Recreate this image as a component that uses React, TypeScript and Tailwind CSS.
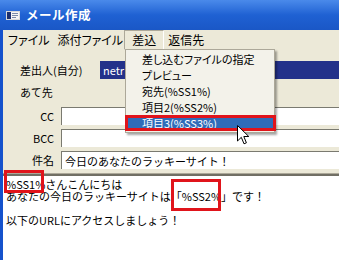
import React from 'react';

const dropItems = ['差し込むファイルの指定', 'プレビュー', '宛先(%SS1%)', '項目2(%SS2%)', '項目3(%SS3%)'];

function TitleIcon() {
  return (
    <svg width="14" height="9" viewBox="0 0 14 9" className="shrink-0">
      <rect x="0.5" y="0.5" width="13" height="8" fill="#f4f4f4" stroke="#d8d8d8" />
      <rect x="1" y="1" width="4" height="7" fill="#1c2f6e" />
      <rect x="6" y="2" width="6" height="1" fill="#7a8aa8" />
      <rect x="6" y="4" width="6" height="1" fill="#7a8aa8" />
      <rect x="6" y="6" width="4" height="1" fill="#7a8aa8" />
    </svg>
  );
}

function Cursor() {
  return (
    <svg width="13" height="21" viewBox="0 0 13 21" className="absolute left-[237px] top-[125px]">
      <path d="M0.5 0.5 L0.5 16 L4.3 12.3 L7 18.8 L9.4 17.8 L6.8 11.5 L11.8 11.5 Z" fill="#ffffff" stroke="#000000" strokeWidth="1" strokeLinejoin="round" />
    </svg>
  );
}

function FieldRow({ label, value }: { label: string; value?: string }) {
  return (
    <div className="flex items-center h-[18px]">
      <div className="w-[52px] text-right pr-[1px]">{label}</div>
      <div className="ml-[6px] flex-1 h-[18px] bg-white border-t border-l border-t-[#7a7a70] border-l-[#7a7a70] flex items-center pl-[3px] whitespace-nowrap">
        {value}
      </div>
    </div>
  );
}

export default function App() {
  return (
    <div
      className="relative w-[339px] h-[260px] overflow-hidden bg-[#ece9d8] text-[11px] leading-[12px] text-black"
      style={{ fontFamily: '"Noto Sans CJK JP", "Noto Sans", sans-serif' }}
    >
      {/* Title bar */}
      <div className="h-[30px] flex items-center gap-[6px] pl-[6px] bg-gradient-to-b from-[#4a8aea] via-[#1f61d3] to-[#1a57c6]">
        <TitleIcon />
        <span className="text-white font-bold text-[12.5px] tracking-[0.5px]">メール作成</span>
      </div>

      <div className="flex flex-col h-[230px] border-l-[3px] border-l-[#1552cc]">
        {/* Menu bar */}
        <div className="h-[20px] flex items-center text-[12px] [font-feature-settings:'palt']">
          <div className="h-[20px] flex items-center pl-[5px] pr-[8px]">ファイル</div>
          <div className="h-[20px] flex items-center pr-[1px]">添付ファイル</div>
          <div className="h-[20px] flex items-center px-[7px] border border-t-[#aca899] border-l-[#aca899] border-b-white border-r-white">
            差込
          </div>
          <div className="h-[20px] flex items-center pl-[4px]">返信先</div>
        </div>

        {/* Header fields */}
        <div className="h-[123px] flex flex-col pt-[11px]">
          <div className="flex items-center h-[18px]">
            <div className="w-[97px] pl-[17px] whitespace-nowrap">差出人(自分)</div>
            <div className="flex-1 h-[18px] bg-[#23318a] text-white flex items-center pl-[3px]">netr</div>
          </div>
          <div className="h-[14px] mt-[6px] pl-[17px] flex items-center">あて先</div>
          <div className="mt-[8px] flex flex-col gap-[4px]">
            <FieldRow label="CC" />
            <FieldRow label="BCC" />
            <FieldRow label="件名" value="今日のあなたのラッキーサイト！" />
          </div>
        </div>

        {/* Separator */}
        <div className="h-[1px] bg-[#aca899]" />
        <div className="h-[2px] bg-[#716f64]" />

        {/* Body */}
        <div className="flex-1 bg-white pt-[2px] pl-[3px] whitespace-nowrap">
          <div className="h-[12px]">%SS1%さんこんにちは</div>
          <div className="h-[12px]">あなたの今日のラッキーサイトは「%SS2%」です！</div>
          <div className="h-[12px]" />
          <div className="h-[12px]">以下のURLにアクセスしましょう！</div>
        </div>
      </div>

      {/* Dropdown menu */}
      <div className="absolute left-[125px] top-[49px] w-[150px] bg-[#f3f2ea] border border-[#aca899] shadow-[2px_2px_2px_rgba(0,0,0,0.35)] py-[1px] text-[11px] [font-feature-settings:'palt']">
        {dropItems.map((d, i) => (
          <div
            key={d}
            className={`h-[16px] flex items-center pl-[16px] whitespace-nowrap ${
              i === dropItems.length - 1 ? 'bg-[#2e6cb9] text-white' : ''
            }`}
          >
            {d}
          </div>
        ))}
      </div>

      {/* Red highlight boxes */}
      <div className="absolute left-[125px] top-[115px] w-[151px] h-[16px] border-[3px] border-[#e0141b]" />
      <div className="absolute left-[4px] top-[170px] w-[40px] h-[23px] border-[3px] border-[#e0141b]" />
      <div className="absolute left-[171px] top-[179px] w-[50px] h-[32px] border-[3px] border-[#e0141b]" />

      <Cursor />
    </div>
  );
}
